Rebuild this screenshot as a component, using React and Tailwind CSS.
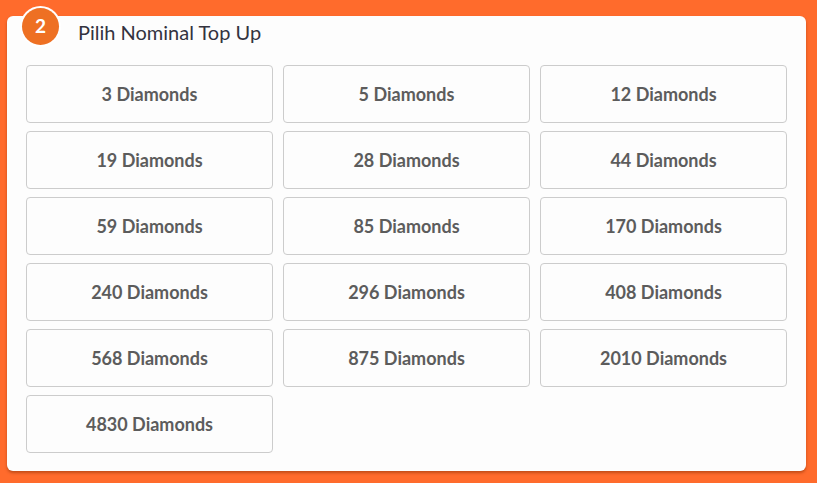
import React from 'react';

const nominals = [3, 5, 12, 19, 28, 44, 59, 85, 170, 240, 296, 408, 568, 875, 2010, 4830];

export default function App() {
    return (
        <div className="w-[817px] h-[483px] bg-[#FF6B2C] pt-[16px] pl-[7px] font-['Lato',sans-serif]">
            <div className="relative w-[799px] h-[455px] bg-[#FDFDFD] rounded-[6px] shadow-[0_2px_3px_rgba(120,40,0,0.45)] px-[19px] pb-[18px]">
                {/* step badge */}
                <div className="absolute left-[13px] top-[-10px] w-[41px] h-[41px] rounded-full bg-white p-[2px]">
                    <div className="w-full h-full rounded-full bg-[#EE7023] flex items-center justify-center text-white text-[19px] font-bold">
                        2
                    </div>
                </div>

                <div className="h-[49px] pl-[52px] flex items-start pt-[3px]">
                    <h2 className="text-[20px] text-[#33333F] leading-[26px]">Pilih Nominal Top Up</h2>
                </div>

                <div className="grid grid-cols-3 gap-x-[10px] gap-y-[8px]">
                    {nominals.map((n) => (
                        <button
                            key={n}
                            className="h-[58px] border border-[#CCCCCC] rounded-[4px] bg-[#FDFDFD] flex items-center justify-center text-[18px] font-bold text-[#5C5C5C]"
                        >
                            {n} Diamonds
                        </button>
                    ))}
                </div>
            </div>
        </div>
    );
}
